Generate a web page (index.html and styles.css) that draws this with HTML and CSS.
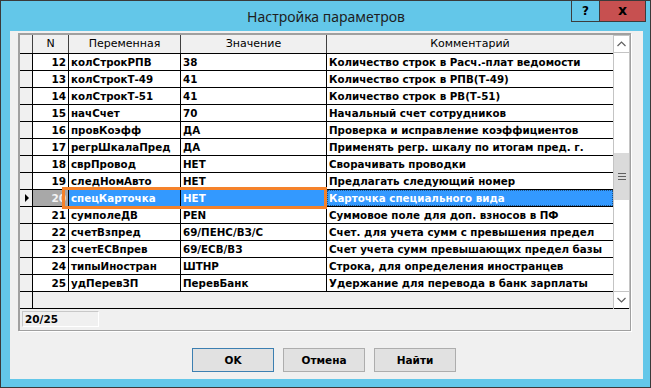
FILE: index.html
```html
<!DOCTYPE html>
<html lang="ru">
<head>
<meta charset="utf-8">
<title>Настройка параметров</title>
<link rel="stylesheet" href="styles.css">
</head>
<body>
<div class="window">
  <div class="titlebar">
    <div class="tb-spacer"></div>
    <div class="title">Настройка параметров</div>
    <div class="caption-buttons">
      <div class="cb help">?</div>
      <div class="cb close">x</div>
    </div>
  </div>
  <div class="client">
    <div class="frame">
      <div class="grid">
        <div class="table">
          <div class="row head">
            <div class="c ind"></div>
            <div class="c">N</div>
            <div class="c">Переменная</div>
            <div class="c">Значение</div>
            <div class="c">Комментарий</div>
          </div>
          <div class="body">
            <div class="row"><div class="c ind"></div><div class="c num">12</div><div class="c">колСтрокРПВ</div><div class="c">38</div><div class="c">Количество строк в Расч.-плат ведомости</div></div>
            <div class="row"><div class="c ind"></div><div class="c num">13</div><div class="c">колСтрокТ-49</div><div class="c">41</div><div class="c">Количество строк в РПВ(Т-49)</div></div>
            <div class="row"><div class="c ind"></div><div class="c num">14</div><div class="c">колСтрокТ-51</div><div class="c">41</div><div class="c">Количество строк в РВ(Т-51)</div></div>
            <div class="row"><div class="c ind"></div><div class="c num">15</div><div class="c">начСчет</div><div class="c">70</div><div class="c">Начальный счет сотрудников</div></div>
            <div class="row"><div class="c ind"></div><div class="c num">16</div><div class="c">провКоэфф</div><div class="c">ДА</div><div class="c">Проверка и исправление коэффициентов</div></div>
            <div class="row"><div class="c ind"></div><div class="c num">17</div><div class="c">регрШкалаПред</div><div class="c">ДА</div><div class="c">Применять регр. шкалу по итогам пред. г.</div></div>
            <div class="row"><div class="c ind"></div><div class="c num">18</div><div class="c">сврПровод</div><div class="c">НЕТ</div><div class="c">Сворачивать проводки</div></div>
            <div class="row"><div class="c ind"></div><div class="c num">19</div><div class="c">следНомАвто</div><div class="c">НЕТ</div><div class="c">Предлагать следующий номер</div></div>
            <div class="row sel"><div class="c ind"><span class="arrow"></span></div><div class="c num">20</div><div class="c">спецКарточка</div><div class="c">НЕТ</div><div class="c focus">Карточка специального вида</div></div>
            <div class="row"><div class="c ind"></div><div class="c num">21</div><div class="c">сумполеДВ</div><div class="c">PEN</div><div class="c">Суммовое поле для доп. взносов в ПФ</div></div>
            <div class="row"><div class="c ind"></div><div class="c num">22</div><div class="c">счетВзпред</div><div class="c">69/ПЕНС/ВЗ/С</div><div class="c">Счет. для учета сумм с превышения предел</div></div>
            <div class="row"><div class="c ind"></div><div class="c num">23</div><div class="c">счетЕСВпрев</div><div class="c">69/ЕСВ/ВЗ</div><div class="c">Счет учета сумм превышающих предел базы</div></div>
            <div class="row"><div class="c ind"></div><div class="c num">24</div><div class="c">типыИностран</div><div class="c">ШТНР</div><div class="c">Строка, для определения иностранцев</div></div>
            <div class="row"><div class="c ind"></div><div class="c num">25</div><div class="c">удПеревЗП</div><div class="c">ПеревБанк</div><div class="c">Удержание для перевода в банк зарплаты</div></div>
            <div class="row empty"><div class="c ind"></div><div class="c fill"></div></div>
            <div class="mark"></div>
          </div>
        </div>
        <div class="scrollbar">
          <div class="sb-btn">
            <svg width="9" height="6" viewBox="0 0 9 6"><path d="M0.5 5 L4.5 1 L8.5 5" fill="none" stroke="#606060" stroke-width="1.2"/></svg>
          </div>
          <div class="sb-track">
            <div class="sb-gap-top"></div>
            <div class="sb-thumb">
              <svg width="8" height="7" viewBox="0 0 8 7"><path d="M0 0.5H8M0 3.5H8M0 6.5H8" stroke="#606060" stroke-width="1"/></svg>
            </div>
            <div class="sb-gap-bottom"></div>
          </div>
          <div class="sb-btn">
            <svg width="9" height="6" viewBox="0 0 9 6"><path d="M0.5 1 L4.5 5 L8.5 1" fill="none" stroke="#606060" stroke-width="1.2"/></svg>
          </div>
        </div>
      </div>
      <div class="status">
        <div class="status-box">20/25</div>
      </div>
    </div>
    <div class="buttons">
      <div class="btn default">OK</div>
      <div class="btn">Отмена</div>
      <div class="btn">Найти</div>
    </div>
  </div>
</div>
</body>
</html>
```

FILE: styles.css
```css
html, body {
  margin: 0;
  padding: 0;
  background: #63c7e9;
}

.window {
  box-sizing: border-box;
  width: 651px;
  height: 388px;
  border: 1px solid #3a3a3a;
  background: #63c7e9;
  display: flex;
  flex-direction: column;
}

.titlebar {
  height: 30px;
  display: grid;
  grid-template-columns: 1fr auto 1fr;
  align-items: start;
}

.title {
  font-family: "Noto Sans", sans-serif;
  font-size: 14px;
  color: #1e1e1e;
  line-height: 31px;
  padding-left: 1px;
}

.caption-buttons {
  display: flex;
  justify-content: flex-end;
  margin-right: 4px;
}

.cb {
  box-sizing: border-box;
  height: 21px;
  display: flex;
  align-items: center;
  justify-content: center;
  font-family: "DejaVu Sans", sans-serif;
  font-weight: bold;
  color: #000;
  border-bottom: 1px solid #3c3c3c;
  border-left: 1px solid #3c3c3c;
}

.cb.help {
  width: 28px;
  font-size: 12px;
  background: #63c7e9;
}

.cb.close {
  width: 47px;
  font-size: 14px;
  background: #c75050;
  border-right: 1px solid #3c3c3c;
  padding-bottom: 2px;
}

.client {
  flex: 1;
  margin: 0 7px 8px 9px;
  background: #f0f0f0;
  padding: 2px 12px 0 8px;
  display: flex;
  flex-direction: column;
}

.frame {
  box-sizing: border-box;
  height: 298px;
  border-style: solid;
  border-width: 2px 1px 1px 2px;
  border-color: #a0a0a0;
  box-shadow: 1px 1px 0 #ffffff;
  display: flex;
  flex-direction: column;
}

.grid {
  display: flex;
}

.table {
  width: 593px;
  font-family: "DejaVu Sans", sans-serif;
  font-size: 10.3px;
  color: #000;
}

.row {
  display: grid;
  grid-template-columns: 12px 35px 111px 145px 1fr;
  column-gap: 1px;
  background: #000;
  padding-bottom: 1px;
}

.c {
  height: 16px;
  line-height: 16px;
  background: #fff;
  padding-left: 2px;
  white-space: nowrap;
  overflow: hidden;
  font-weight: bold;
}

.row.head {
  background: #404040;
  padding-bottom: 0;
  border-bottom: 1px solid #000;
}

.row.head .c {
  height: 18px;
  line-height: 18px;
  background: #f0f0f0;
  text-align: center;
  font-weight: normal;
  font-size: 11px;
  padding-left: 0;
  color: #000;
}

.c.ind {
  background: #f0f0f0;
  padding-left: 0;
  display: flex;
  align-items: center;
  justify-content: center;
}

.c.num {
  text-align: right;
  padding-left: 0;
  padding-right: 2px;
  font-size: 10.5px;
}

.body {
  position: relative;
}

.row.sel .c {
  background: #3399ff;
  color: #fff;
}

.row.sel .c.ind {
  background: #f0f0f0;
}

.row.sel .c.num {
  background: #a8a8a8;
  color: #f4f4f4;
}

.row.sel .c.focus {
  box-sizing: border-box;
  border: 1px dotted #1d4f80;
  line-height: 14px;
  padding-left: 1px;
}

.arrow {
  width: 0;
  height: 0;
  border-top: 4px solid transparent;
  border-bottom: 4px solid transparent;
  border-left: 4px solid #000;
  margin-left: 1px;
}

.row.empty {
  grid-template-columns: 12px 1fr;
}

.c.fill {
  background: #f0f0f0;
}

.mark {
  position: absolute;
  left: 42px;
  top: 133px;
  width: 265px;
  height: 22px;
  box-sizing: border-box;
  border: 3px solid #f5822a;
}

.scrollbar {
  box-sizing: border-box;
  width: 17px;
  border-left: 1px solid #c4c4c4;
  border-right: 1px solid #c4c4c4;
  background: #ffffff;
  display: flex;
  flex-direction: column;
  border-top: 1px solid #c4c4c4;
}

.sb-btn {
  height: 16px;
  display: flex;
  align-items: center;
  justify-content: center;
  background: #ffffff;
}

.sb-btn:first-child {
  border-bottom: 1px solid #c4c4c4;
}

.sb-btn:last-child {
  border-top: 1px solid #c4c4c4;
  border-bottom: 1px solid #000;
}

.sb-track {
  flex: 1;
  display: flex;
  flex-direction: column;
}

.sb-gap-top {
  height: 100px;
}

.sb-thumb {
  height: 47px;
  background: #dadada;
  display: flex;
  align-items: center;
  justify-content: center;
}

.sb-gap-bottom {
  flex: 1;
}

.status {
  flex: 1;
  padding: 2px 0 0 2px;
}

.status-box {
  box-sizing: border-box;
  width: 77px;
  height: 16px;
  border-style: solid;
  border-width: 1px;
  border-color: #c8c8c8 #ffffff #ffffff #c8c8c8;
  font-family: "DejaVu Sans", sans-serif;
  font-weight: bold;
  font-size: 10.5px;
  line-height: 14px;
  padding-left: 2px;
  color: #000;
}

.buttons {
  display: flex;
  justify-content: center;
  gap: 9px;
  margin-top: 17px;
  padding-right: 1px;
}

.btn {
  box-sizing: border-box;
  width: 82px;
  height: 24px;
  border: 1px solid #adadad;
  background: #e1e1e1;
  display: flex;
  align-items: center;
  justify-content: center;
  font-family: "DejaVu Sans", sans-serif;
  font-weight: bold;
  font-size: 10.5px;
  color: #000;
}

.btn.default {
  border-color: #3c7fb1;
}
```
